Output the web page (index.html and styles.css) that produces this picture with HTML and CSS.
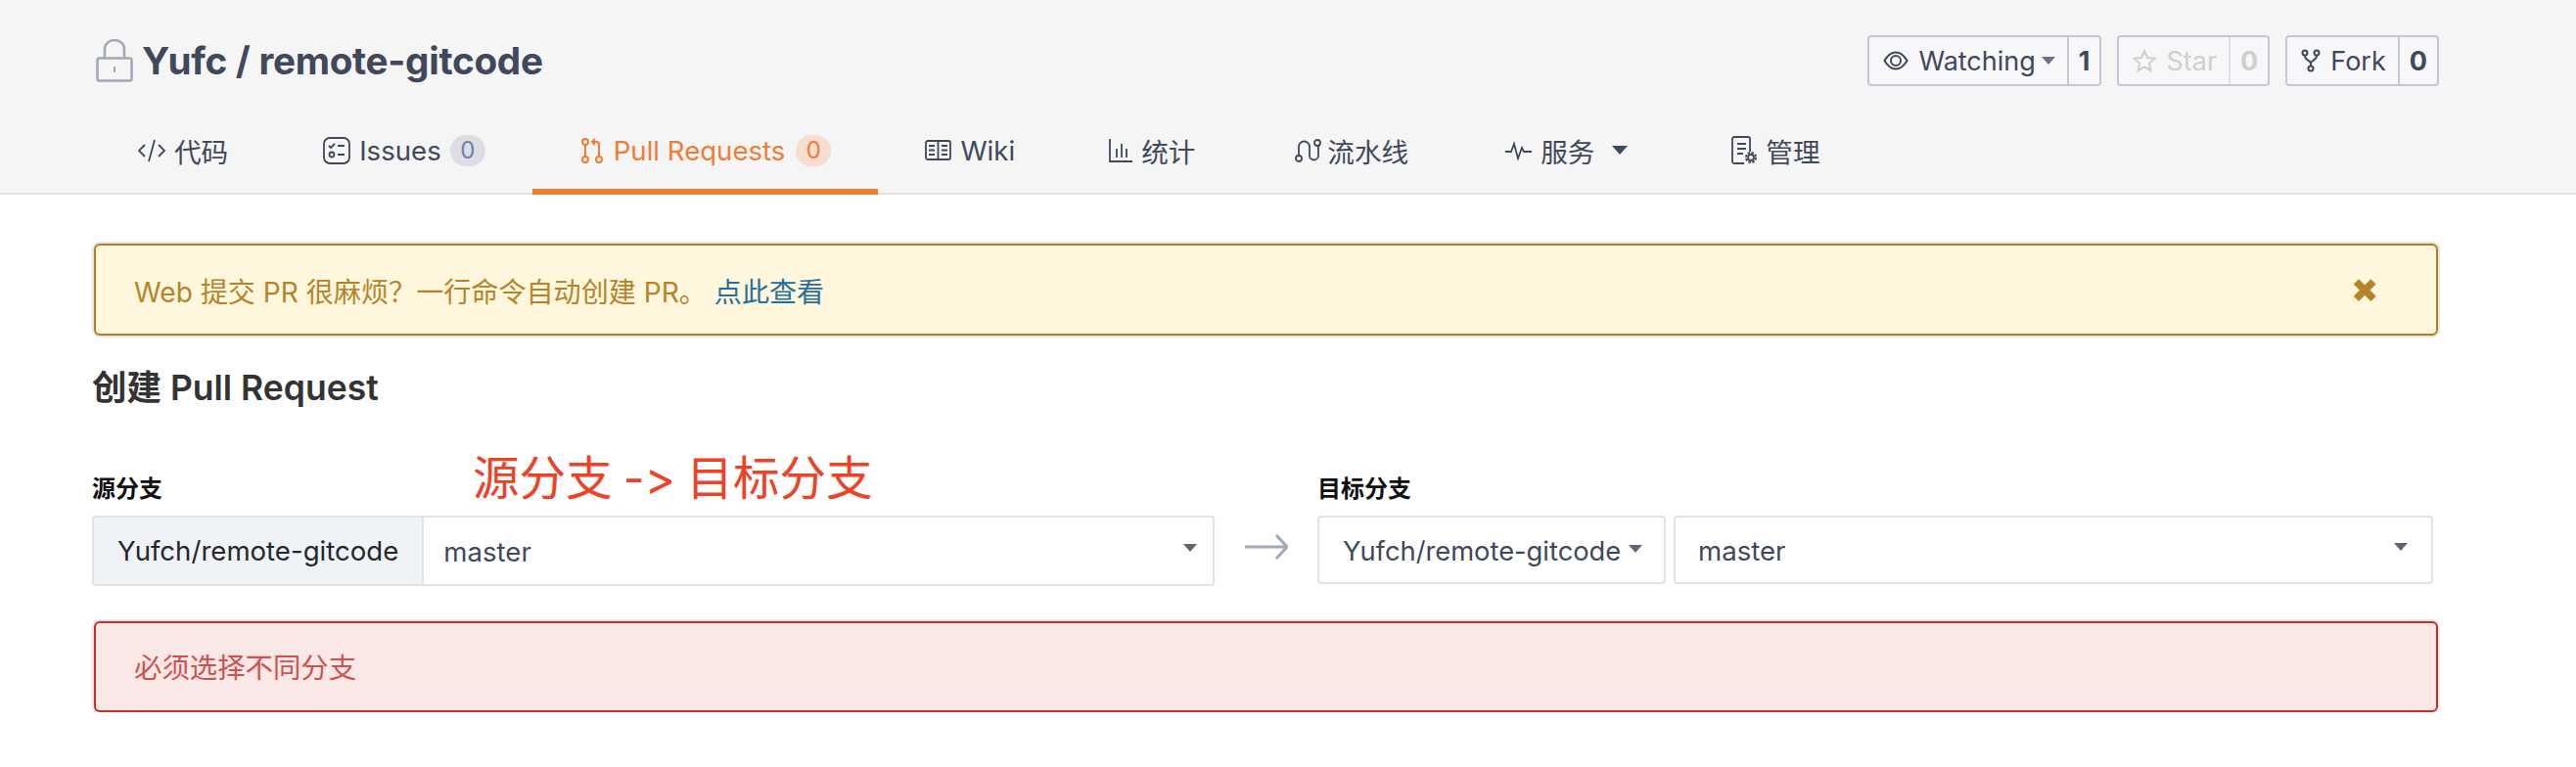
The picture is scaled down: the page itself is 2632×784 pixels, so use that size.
FILE: index.html
```html
<!DOCTYPE html>
<html lang="zh-CN">
<head>
  <meta charset="UTF-8">
  <meta name="viewport" content="width=device-width, initial-scale=1.0">
  <title>创建 Pull Request</title>
  <link rel="stylesheet" href="styles.css">
</head>
<body>
  <div class="repo-header">
    <div class="repo-top">
      <div class="repo-title">
        <svg class="lock-icon" width="38" height="44" viewBox="0 0 38 44" fill="none" stroke="#a3a8b8" stroke-width="2.5">
          <path d="M9 20V10a10 9 0 0 1 20 0v10"/>
          <rect x="1.5" y="19.5" width="35" height="23" rx="2"/>
          <path d="M19 28v6" stroke-width="2"/>
        </svg>
        <h2>Yufc / remote-gitcode</h2>
      </div>
      <div class="repo-actions">
        <div class="count-btn">
          <span class="count-label">
            <svg width="26" height="20" viewBox="0 0 26 20" fill="none" stroke="#40485b" stroke-width="2">
              <path d="M1.5 10C5 4 9 1.5 13 1.5S21 4 24.500 10C21 16 17 18.500 13 18.500S5 16 1.500 10Z"/>
              <circle cx="13" cy="10" r="5"/>
            </svg>
            Watching<i class="caret caret-btn"></i>
          </span>
          <span class="count-num">1</span>
        </div>
        <div class="count-btn disabled">
          <span class="count-label">
            <svg width="24" height="24" viewBox="0 0 24 24" fill="none" stroke="#cfcfcf" stroke-width="2">
              <path d="M12 2l3 7 7.500.8-5.600 5 1.600 7.400L12 18.400l-6.500 3.800 1.600-7.400-5.600-5L9 9z"/>
            </svg>
            Star
          </span>
          <span class="count-num">0</span>
        </div>
        <div class="count-btn">
          <span class="count-label">
            <svg width="20" height="24" viewBox="0 0 20 24" fill="none" stroke="#40485b" stroke-width="2">
              <circle cx="4" cy="4" r="2.500"/>
              <circle cx="16" cy="4" r="2.500"/>
              <circle cx="10" cy="20" r="2.500"/>
              <path d="M4 7c0 5 6 4 6 8v2M16 7c0 5-6 4-6 8"/>
            </svg>
            Fork
          </span>
          <span class="count-num">0</span>
        </div>
      </div>
    </div>
    <div class="repo-tabs">
      <a class="tab tab-code">
        <svg width="28" height="24" viewBox="0 0 28 24" fill="none" stroke="#40485b" stroke-width="1.800">
          <path d="M7 6l-6 6 6 6M21 6l6 6-6 6M17 1l-6 22"/>
        </svg>
        代码
      </a>
      <a class="tab tab-issues">
        <svg width="28" height="28" viewBox="0 0 28 28" fill="none" stroke="#40485b" stroke-width="1.800">
          <rect x="1" y="1" width="26" height="26" rx="6"/>
          <path d="M6 9l2 2 4-4M15 9h7M15 18h7"/>
          <circle cx="9" cy="18" r="2.500"/>
        </svg>
        Issues<span class="badge">0</span>
      </a>
      <a class="tab active">
        <svg width="22" height="26" viewBox="0 0 22 26" fill="none" stroke="#f07c33" stroke-width="2">
          <circle cx="4" cy="4" r="3"/>
          <circle cx="4" cy="22" r="3"/>
          <circle cx="18" cy="22" r="3"/>
          <path d="M4 7v12M18 19V7c0-2-1-3-3-3h-4M14 1l-3 3 3 3"/>
        </svg>
        Pull Requests<span class="badge">0</span>
      </a>
      <a class="tab">
        <svg width="27" height="21" viewBox="0 0 27 21" fill="none" stroke="#40485b" stroke-width="1.800">
          <rect x="1" y="1" width="25" height="19" rx="2"/>
          <path d="M13.500 1v19M4 6h6M4 10.500h6M4 15h6M17 6h6M17 10.500h6M17 15h6"/>
        </svg>
        Wiki
      </a>
      <a class="tab tab-stats">
        <svg width="24" height="24" viewBox="0 0 24 24" fill="none" stroke="#40485b" stroke-width="1.800">
          <path d="M1 0v23h23M8 19v-9M13 19V5M18 19v-9"/>
        </svg>
        统计
      </a>
      <a class="tab tab-pipeline">
        <svg width="27" height="24" viewBox="0 0 27 24" fill="none" stroke="#40485b" stroke-width="1.800">
          <circle cx="4" cy="20" r="3"/>
          <circle cx="23" cy="4" r="3"/>
          <path d="M4 17V8a5.500 5.500 0 0 1 11 0v9a4.500 4.500 0 0 0 9 0V7"/>
        </svg>
        流水线
      </a>
      <a class="tab tab-menu">
        <svg width="27" height="20" viewBox="0 0 27 20" fill="none" stroke="#40485b" stroke-width="1.800">
          <path d="M0 11h6l3-8 4 15 4-11 2 4h8"/>
        </svg>
        服务<i class="caret caret-tab"></i>
      </a>
      <a class="tab">
        <svg width="26" height="29" viewBox="0 0 26 29" fill="none" stroke="#40485b" stroke-width="1.800">
          <path d="M13 28H3a2 2 0 0 1-2-2V3a2 2 0 0 1 2-2h14a2 2 0 0 1 2 2v13M6 8h9M6 13h9M6 18h6"/>
          <circle cx="20" cy="22" r="3"/>
          <circle cx="20" cy="22" r="5" stroke-width="2" stroke-dasharray="2.500 1.400"/>
        </svg>
        管理
      </a>
    </div>
  </div>

  <div class="page">
    <div class="message warning">
      <span>Web 提交 PR 很麻烦&#xFF1F;一行命令自动创建 PR。 <a class="msg-link">点此查看</a></span>
      <span class="msg-close">✖</span>
    </div>

    <h3 class="form-title">创建 Pull Request</h3>

    <div class="branch-form">
      <span class="annotation">源分支 -&gt; 目标分支</span>
      <div class="branch-side branch-source">
        <label>源分支</label>
        <div class="input-group">
          <div class="input-prefix">Yufch/remote-gitcode</div>
          <div class="select select-grow">master<i class="caret caret-select"></i></div>
        </div>
      </div>
      <svg class="branch-arrow" width="44" height="26" viewBox="0 0 44 26" fill="none" stroke="#a3a8b8" stroke-width="3">
        <path d="M0 13h43M32 1l11 12-11 12"/>
      </svg>
      <div class="branch-side branch-target">
        <label>目标分支</label>
        <div class="select-row">
          <div class="select select-repo">Yufch/remote-gitcode<i class="caret caret-inline"></i></div>
          <div class="select select-grow">master<i class="caret caret-select"></i></div>
        </div>
      </div>
    </div>

    <div class="message error">必须选择不同分支</div>
  </div>
</body>
</html>
```

FILE: styles.css
```css
* {
  box-sizing: border-box;
}

body {
  margin: 0;
  background: #fff;
  color: #40485b;
  font-family: Inter, "Noto Sans CJK SC", sans-serif;
  font-size: 27.6px;
}

.repo-header {
  height: 199px;
  padding: 36px 140px 0 94px;
  background: #f5f5f5;
  border-bottom: 2px solid #e0e0e0;
}

.repo-top {
  display: flex;
  justify-content: space-between;
  align-items: center;
  height: 52px;
}

.repo-title {
  display: flex;
  align-items: center;
  gap: 9px;
  padding-left: 4px;
}

.repo-title h2 {
  margin: 0;
  font-size: 38.700px;
  font-weight: 700;
  letter-spacing: -0.3px;
}

.repo-actions {
  display: flex;
  gap: 16px;
}

.count-btn {
  display: flex;
  height: 52px;
  border: 2px solid #c4c8d4;
  border-radius: 4px;
  background: #f7f7f9;
  font-size: 27px;
}

.count-label {
  display: flex;
  align-items: center;
  gap: 10px;
  padding: 0 12px 0 14px;
  border-right: 2px solid #c4c8d4;
}

.count-num {
  display: flex;
  align-items: center;
  justify-content: center;
  padding: 0 10px;
  font-weight: 700;
}

.count-btn.disabled {
  color: #cfcfcf;
}

.count-btn.disabled .count-label {
  border-right-color: #e2e2e6;
}

.caret {
  display: inline-block;
  width: 0;
  height: 0;
  border-style: solid;
  border-color: #40485b transparent transparent;
}

.caret-btn {
  margin-left: -4px;
  border-width: 8px 7px 0;
  border-top-color: #6b7183;
}

.caret-tab {
  margin-left: 9px;
  border-width: 9px 8px 0;
}

.caret-select {
  position: absolute;
  top: 26px;
  right: 24px;
  border-width: 8px 7px 0;
  border-top-color: #5e6577;
}

.input-group .caret-select {
  top: 27px;
  right: 16px;
}

.caret-inline {
  margin-left: 8px;
  margin-top: -4px;
  border-width: 8px 7px 0;
  border-top-color: #5e6577;
}

.repo-tabs {
  display: flex;
  height: 91px;
  margin-top: 20px;
}

.tab {
  display: flex;
  align-items: center;
  gap: 9px;
  height: 91px;
  padding: 6px 48px 0;
  border-bottom: 6px solid transparent;
  color: #40485b;
}

.tab-code {
  padding-left: 47px;
  padding-right: 49px;
}

.tab-issues {
  padding-right: 48px;
}

.tab-stats {
  padding-right: 54px;
}

.tab-pipeline {
  gap: 6px;
  padding-right: 51px;
}

.tab-menu {
  padding-right: 58px;
}

.tab.active {
  gap: 11px;
  padding-left: 50px;
  color: #f07c33;
  border-bottom-color: #f07c33;
}

.badge {
  display: flex;
  align-items: center;
  justify-content: center;
  width: 36px;
  height: 32px;
  border-radius: 16px;
  background: #dcdee3;
  color: #6f82ad;
  font-size: 24px;
}

.tab.active .badge {
  background: #f6ddcf;
  color: #f07c33;
}

.page {
  width: 2398px;
  margin-left: 94px;
  padding-top: 50px;
}

.message {
  display: flex;
  align-items: center;
  margin: 0 1px 0 2px;
  border-radius: 6px;
  padding: 0 39px;
  border: 2px solid;
  font-size: 28.400px;
}

.message.warning {
  justify-content: space-between;
  height: 94px;
  background: #fef7dd;
  border-color: #b07f1f;
  color: #b58428;
  font-size: 28.100px;
  box-shadow: 0 0 0 2px #e3e6e8;
}

.msg-link {
  color: #276f9a;
}

.msg-close {
  margin-right: 20px;
  font-size: 34px;
}

.message.error {
  height: 93px;
  margin-top: 36px;
  padding-bottom: 2px;
  background: #fae8e7;
  border-color: #c22f28;
  color: #d0504d;
  box-shadow: 0 0 0 2px #e3e6e8;
}

.form-title {
  margin: 34px 0 0;
  color: #333;
  font-size: 35.500px;
  font-weight: 600;
  line-height: 40px;
}

.branch-form {
  position: relative;
  display: flex;
  align-items: flex-end;
  margin-top: 71px;
}

.annotation {
  position: absolute;
  top: -27px;
  left: 389px;
  color: #ee4125;
  font-size: 47.500px;
  font-variant-ligatures: none;
  word-spacing: -2px;
  line-height: 56px;
  white-space: nowrap;
}

.branch-side label {
  display: block;
  margin-bottom: 15px;
  color: #111;
  font-size: 24px;
  font-weight: 600;
  line-height: 24px;
}

.branch-source {
  width: 1147px;
}

.branch-arrow {
  margin: 0 30px 27px 31px;
}

.branch-target {
  width: 1140px;
}

.input-group,
.select-row {
  display: flex;
  height: 72px;
}

.select-row {
  gap: 8px;
  height: 70px;
  margin-bottom: 2px;
}

.input-prefix {
  display: flex;
  align-items: center;
  padding: 0 24px;
  background: #f0f3f6;
  border: 2px solid #dfe3e8;
  border-right: none;
  border-radius: 4px 0 0 4px;
  color: #24272e;
  white-space: nowrap;
}

.select {
  position: relative;
  display: flex;
  align-items: center;
  padding: 2px 22px 0;
  background: #fff;
  border: 2px solid #dfe3e8;
  border-radius: 4px;
}

.input-group .select {
  padding-left: 20px;
  border-radius: 0 4px 4px 0;
}

.select-grow {
  flex: 1;
}

.select-row .select-grow {
  padding-left: 23px;
}

.select-repo {
  width: 356px;
  padding-left: 24px;
  font-size: 27.300px;
  white-space: nowrap;
}
```
